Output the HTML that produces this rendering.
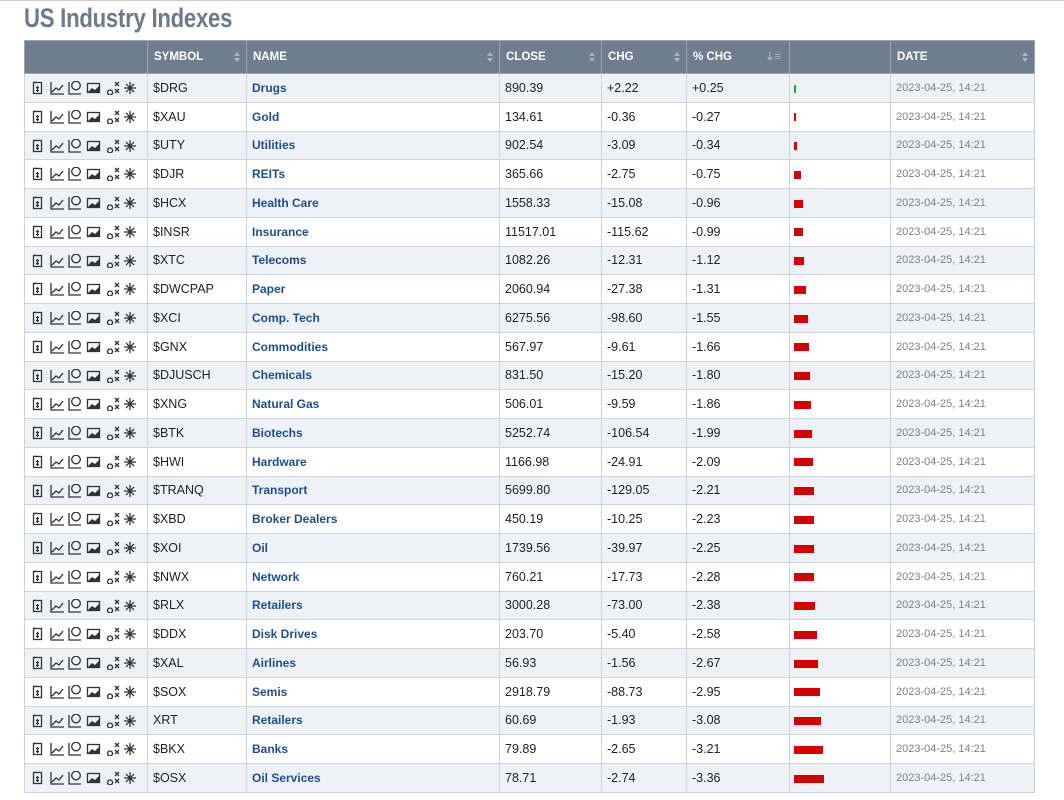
<!DOCTYPE html>
<html><head><meta charset="utf-8"><style>
body{margin:0;background:#fff;font-family:"Liberation Sans",sans-serif;width:1064px;height:800px;overflow:hidden;position:relative}
.top{position:absolute;left:0;right:0;top:0;height:1px;background:#ccc}
h1{position:absolute;left:24px;top:3px;margin:0;font-family:"Liberation Sans Narrow","Liberation Sans",sans-serif;font-weight:bold;font-size:27px;color:#6b7a8c;letter-spacing:-0.3px;transform:scaleX(0.82);transform-origin:left top;white-space:nowrap}
table{position:absolute;left:24px;top:40px;border-collapse:collapse;table-layout:fixed;width:1010px}
th{background:#6e7d8f;color:#fff;font-size:11.5px;font-weight:bold;text-align:left;height:32px;padding:0 6px;border:1px solid #9aa7b5;position:relative}
th .s{position:absolute;right:6px;top:11px;width:6px;height:10px}
th .s:before{content:"";position:absolute;left:0;top:0;border:3px solid transparent;border-bottom:4px solid #aab5c1;border-top:0}
th .s:after{content:"";position:absolute;left:0;top:6px;border:3px solid transparent;border-top:4px solid #aab5c1;border-bottom:0}
td{height:27.76px;padding:0 5px;border:1px solid #c9d4df;font-size:12.5px;color:#222;white-space:nowrap}
tr:nth-child(even) td{background:#eef2f6}
tr:nth-child(odd) td{background:#fff}
td.n{color:#1d4f8f;font-weight:bold;font-size:12px}
td.d{color:#808080;font-size:11px}
td.ic{padding:0 0 0 7px}
.b{display:inline-block;height:8px;background:#d40000;vertical-align:middle;margin-left:-1px}
.g{background:#1fb31f}
svg{vertical-align:middle}
</style></head><body>
<div class="top"></div>
<h1>US Industry Indexes</h1>
<svg width="0" height="0" style="position:absolute"><defs>
<symbol id="ic" viewBox="0 0 110 14">
<g fill="none" stroke="#333" stroke-width="1.3">
<rect x="1.5" y="1.5" width="8" height="11"/><path d="M3 1.5v-1M5.5 5v6M4 6.5h3M4 9.5h3"/>
<path d="M19 1v12h13M20 11l4-4 3 2 4-5"/>
<path d="M37 1v12h12M40 3a4 4 0 1 0 8 3a4 4 0 0 0-8-3"/>
<rect x="55.5" y="2.5" width="12" height="9"/>
<path d="M78 9a2.5 2.5 0 1 0 0.1 0M83 8l4 4M87 8l-4 4M83 1l4 4M87 1l-4 4"/>
<path d="M98 1v12M92 7h12M94 3l8 8M102 3l-8 8"/>
</g>
<path d="M56 11l4-4 3 2 4-4v6z" fill="#333"/>
</symbol></defs></svg>
<table>
<colgroup><col style="width:123px"><col style="width:99px"><col style="width:253px"><col style="width:102px"><col style="width:85px"><col style="width:103px"><col style="width:101px"><col style="width:144px"></colgroup>
<tr><th></th><th>SYMBOL<span class="s"></span></th><th>NAME<span class="s"></span></th><th>CLOSE<span class="s"></span></th><th>CHG<span class="s"></span></th><th>% CHG<span style="position:absolute;right:8px;top:9px;color:#aab5c1;font-size:11px">⇣≡</span></th><th></th><th>DATE<span class="s"></span></th></tr>
<tr><td class="ic"><svg width="110" height="14"><use href="#ic"/></svg></td><td>$DRG</td><td class="n">Drugs</td><td>890.39</td><td>+2.22</td><td>+0.25</td><td><span class="b g" style="width:2px"></span></td><td class="d">2023-04-25, 14:21</td></tr>
<tr><td class="ic"><svg width="110" height="14"><use href="#ic"/></svg></td><td>$XAU</td><td class="n">Gold</td><td>134.61</td><td>-0.36</td><td>-0.27</td><td><span class="b" style="width:2px"></span></td><td class="d">2023-04-25, 14:21</td></tr>
<tr><td class="ic"><svg width="110" height="14"><use href="#ic"/></svg></td><td>$UTY</td><td class="n">Utilities</td><td>902.54</td><td>-3.09</td><td>-0.34</td><td><span class="b" style="width:3px"></span></td><td class="d">2023-04-25, 14:21</td></tr>
<tr><td class="ic"><svg width="110" height="14"><use href="#ic"/></svg></td><td>$DJR</td><td class="n">REITs</td><td>365.66</td><td>-2.75</td><td>-0.75</td><td><span class="b" style="width:7px"></span></td><td class="d">2023-04-25, 14:21</td></tr>
<tr><td class="ic"><svg width="110" height="14"><use href="#ic"/></svg></td><td>$HCX</td><td class="n">Health Care</td><td>1558.33</td><td>-15.08</td><td>-0.96</td><td><span class="b" style="width:9px"></span></td><td class="d">2023-04-25, 14:21</td></tr>
<tr><td class="ic"><svg width="110" height="14"><use href="#ic"/></svg></td><td>$INSR</td><td class="n">Insurance</td><td>11517.01</td><td>-115.62</td><td>-0.99</td><td><span class="b" style="width:9px"></span></td><td class="d">2023-04-25, 14:21</td></tr>
<tr><td class="ic"><svg width="110" height="14"><use href="#ic"/></svg></td><td>$XTC</td><td class="n">Telecoms</td><td>1082.26</td><td>-12.31</td><td>-1.12</td><td><span class="b" style="width:10px"></span></td><td class="d">2023-04-25, 14:21</td></tr>
<tr><td class="ic"><svg width="110" height="14"><use href="#ic"/></svg></td><td>$DWCPAP</td><td class="n">Paper</td><td>2060.94</td><td>-27.38</td><td>-1.31</td><td><span class="b" style="width:12px"></span></td><td class="d">2023-04-25, 14:21</td></tr>
<tr><td class="ic"><svg width="110" height="14"><use href="#ic"/></svg></td><td>$XCI</td><td class="n">Comp. Tech</td><td>6275.56</td><td>-98.60</td><td>-1.55</td><td><span class="b" style="width:14px"></span></td><td class="d">2023-04-25, 14:21</td></tr>
<tr><td class="ic"><svg width="110" height="14"><use href="#ic"/></svg></td><td>$GNX</td><td class="n">Commodities</td><td>567.97</td><td>-9.61</td><td>-1.66</td><td><span class="b" style="width:15px"></span></td><td class="d">2023-04-25, 14:21</td></tr>
<tr><td class="ic"><svg width="110" height="14"><use href="#ic"/></svg></td><td>$DJUSCH</td><td class="n">Chemicals</td><td>831.50</td><td>-15.20</td><td>-1.80</td><td><span class="b" style="width:16px"></span></td><td class="d">2023-04-25, 14:21</td></tr>
<tr><td class="ic"><svg width="110" height="14"><use href="#ic"/></svg></td><td>$XNG</td><td class="n">Natural Gas</td><td>506.01</td><td>-9.59</td><td>-1.86</td><td><span class="b" style="width:17px"></span></td><td class="d">2023-04-25, 14:21</td></tr>
<tr><td class="ic"><svg width="110" height="14"><use href="#ic"/></svg></td><td>$BTK</td><td class="n">Biotechs</td><td>5252.74</td><td>-106.54</td><td>-1.99</td><td><span class="b" style="width:18px"></span></td><td class="d">2023-04-25, 14:21</td></tr>
<tr><td class="ic"><svg width="110" height="14"><use href="#ic"/></svg></td><td>$HWI</td><td class="n">Hardware</td><td>1166.98</td><td>-24.91</td><td>-2.09</td><td><span class="b" style="width:19px"></span></td><td class="d">2023-04-25, 14:21</td></tr>
<tr><td class="ic"><svg width="110" height="14"><use href="#ic"/></svg></td><td>$TRANQ</td><td class="n">Transport</td><td>5699.80</td><td>-129.05</td><td>-2.21</td><td><span class="b" style="width:20px"></span></td><td class="d">2023-04-25, 14:21</td></tr>
<tr><td class="ic"><svg width="110" height="14"><use href="#ic"/></svg></td><td>$XBD</td><td class="n">Broker Dealers</td><td>450.19</td><td>-10.25</td><td>-2.23</td><td><span class="b" style="width:20px"></span></td><td class="d">2023-04-25, 14:21</td></tr>
<tr><td class="ic"><svg width="110" height="14"><use href="#ic"/></svg></td><td>$XOI</td><td class="n">Oil</td><td>1739.56</td><td>-39.97</td><td>-2.25</td><td><span class="b" style="width:20px"></span></td><td class="d">2023-04-25, 14:21</td></tr>
<tr><td class="ic"><svg width="110" height="14"><use href="#ic"/></svg></td><td>$NWX</td><td class="n">Network</td><td>760.21</td><td>-17.73</td><td>-2.28</td><td><span class="b" style="width:20px"></span></td><td class="d">2023-04-25, 14:21</td></tr>
<tr><td class="ic"><svg width="110" height="14"><use href="#ic"/></svg></td><td>$RLX</td><td class="n">Retailers</td><td>3000.28</td><td>-73.00</td><td>-2.38</td><td><span class="b" style="width:21px"></span></td><td class="d">2023-04-25, 14:21</td></tr>
<tr><td class="ic"><svg width="110" height="14"><use href="#ic"/></svg></td><td>$DDX</td><td class="n">Disk Drives</td><td>203.70</td><td>-5.40</td><td>-2.58</td><td><span class="b" style="width:23px"></span></td><td class="d">2023-04-25, 14:21</td></tr>
<tr><td class="ic"><svg width="110" height="14"><use href="#ic"/></svg></td><td>$XAL</td><td class="n">Airlines</td><td>56.93</td><td>-1.56</td><td>-2.67</td><td><span class="b" style="width:24px"></span></td><td class="d">2023-04-25, 14:21</td></tr>
<tr><td class="ic"><svg width="110" height="14"><use href="#ic"/></svg></td><td>$SOX</td><td class="n">Semis</td><td>2918.79</td><td>-88.73</td><td>-2.95</td><td><span class="b" style="width:26px"></span></td><td class="d">2023-04-25, 14:21</td></tr>
<tr><td class="ic"><svg width="110" height="14"><use href="#ic"/></svg></td><td>XRT</td><td class="n">Retailers</td><td>60.69</td><td>-1.93</td><td>-3.08</td><td><span class="b" style="width:27px"></span></td><td class="d">2023-04-25, 14:21</td></tr>
<tr><td class="ic"><svg width="110" height="14"><use href="#ic"/></svg></td><td>$BKX</td><td class="n">Banks</td><td>79.89</td><td>-2.65</td><td>-3.21</td><td><span class="b" style="width:29px"></span></td><td class="d">2023-04-25, 14:21</td></tr>
<tr><td class="ic"><svg width="110" height="14"><use href="#ic"/></svg></td><td>$OSX</td><td class="n">Oil Services</td><td>78.71</td><td>-2.74</td><td>-3.36</td><td><span class="b" style="width:30px"></span></td><td class="d">2023-04-25, 14:21</td></tr>
</table>
</body></html>
